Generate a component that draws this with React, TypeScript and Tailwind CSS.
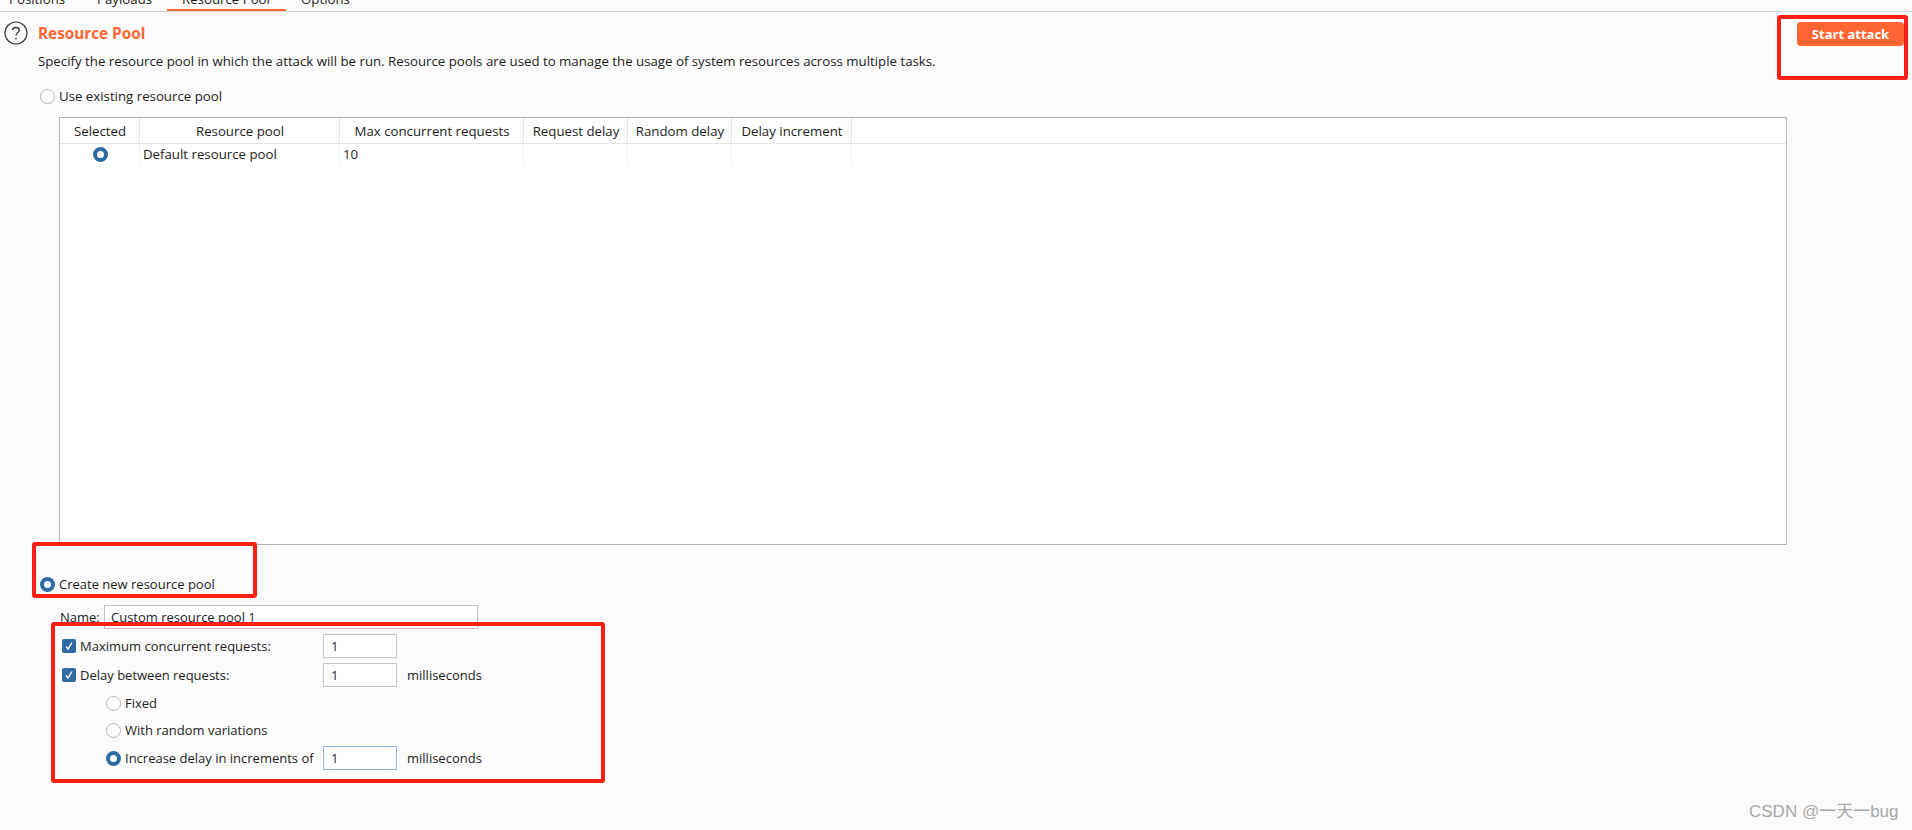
import React from 'react';

const FONT = 'font-["Open_Sans",sans-serif]';

const columns = [
  { label: 'Selected', width: 'w-[80px]' },
  { label: 'Resource pool', width: 'w-[200px]' },
  { label: 'Max concurrent requests', width: 'w-[184px]' },
  { label: 'Request delay', width: 'w-[104px]' },
  { label: 'Random delay', width: 'w-[104px]' },
  { label: 'Delay increment', width: 'w-[120px]' },
];

const Radio = ({ checked = false }: { checked?: boolean }) =>
  checked ? (
    <span className="box-border block w-[15px] h-[15px] shrink-0 rounded-full border-[4px] border-[#2f6aa3] bg-white" />
  ) : (
    <span className="box-border block w-[15px] h-[15px] shrink-0 rounded-full border border-[#b4b4b4] bg-white" />
  );

const Checkbox = () => (
  <span className="flex items-center justify-center w-[14px] h-[14px] shrink-0 rounded-[2px] bg-[#2f6aa3]">
    <svg width="10" height="10" viewBox="0 0 10 10" fill="none" stroke="#fff" strokeWidth="1.4">
      <path d="M2 5.5 L4 8 L8 1.5" />
    </svg>
  </span>
);

const NumberBox = ({ focused = false }: { focused?: boolean }) => (
  <div
    className={`box-border w-[74px] h-[24px] pl-[7px] flex items-center bg-white border ${
      focused ? 'border-[#8db4e2]' : 'border-[#c4c4c4]'
    }`}
  >
    1
  </div>
);

const HelpIcon = () => (
  <svg width="24" height="24" viewBox="0 0 24 24" fill="none" className="shrink-0">
    <circle cx="12" cy="12" r="11" stroke="#3c3c3c" strokeWidth="1.2" />
    <path d="M8.6 9.2 C8.8 5.6 15.2 5.6 15.3 9.2 C15.4 11.6 12 11.6 12 14.6" stroke="#3c3c3c" strokeWidth="1.3" />
    <circle cx="12" cy="17.6" r="0.9" fill="#3c3c3c" />
  </svg>
);

export default function App() {
  return (
    <div className={`${FONT} relative h-[830px] overflow-hidden bg-[#fbfbfb] text-[13.25px] leading-[18px] text-[#1c1c1c]`}>
      {/* tab strip, cropped by the top of the picture */}
      <div className="flex items-end h-[12px] pl-[9px] border-b border-[#d4d4d4] overflow-hidden">
        <div className="w-[88px] shrink-0 pb-[3px]">Positions</div>
        <div className="w-[70px] shrink-0 pb-[3px]">Payloads</div>
        <div className="w-[119px] shrink-0 pb-[1px] pl-[15px] border-b-2 border-[#ff6633]">Resource Pool</div>
        <div className="pl-[15px] pb-[3px]">Options</div>
      </div>

      <div className="flex justify-between pl-[4px] pr-[8px] pt-[9px]">
        <div className="flex items-center gap-[10px] h-[24px]">
          <HelpIcon />
          <h1 className="text-[15.3px] font-bold text-[#ff6633]">Resource Pool</h1>
        </div>
        <button className="mt-[1px] w-[107px] h-[24px] rounded-[4px] bg-[#ff6633] text-white text-[13px] font-bold">
          Start attack
        </button>
      </div>

      <div className="pl-[38px] mt-[6px]">Specify the resource pool in which the attack will be run. Resource pools are used to manage the usage of system resources across multiple tasks.</div>

      <div className="flex items-center gap-[4px] pl-[40px] mt-[17px]">
        <Radio />
        <span>Use existing resource pool</span>
      </div>

      <div className="ml-[59px] mt-[12px] w-[1728px] h-[428px] border border-[#b4b4b4] bg-white">
        <div className="flex h-[26px] border-b border-[#e6e6e6]">
          {columns.map((c) => (
            <div key={c.label} className={`${c.width} pl-[1px] flex items-center justify-center border-r border-[#e6e6e6]`}>
              {c.label}
            </div>
          ))}
        </div>
        <div className="flex h-[20px] items-center">
          <div className="w-[80px] pl-[2px] flex justify-center border-r border-[#f2f2f2] h-full items-center">
            <Radio checked />
          </div>
          <div className="w-[200px] pl-[3px] border-r border-[#f2f2f2] h-full flex items-center">Default resource pool</div>
          <div className="w-[184px] pl-[3px] border-r border-[#f2f2f2] h-full flex items-center">10</div>
          <div className="w-[104px] border-r border-[#f2f2f2] h-full" />
          <div className="w-[104px] border-r border-[#f2f2f2] h-full" />
          <div className="w-[120px] border-r border-[#f2f2f2] h-full" />
        </div>
      </div>

      <div className="text-[13px]">
        <div className="flex items-center gap-[4px] pl-[40px] mt-[30px]">
          <Radio checked />
          <span>Create new resource pool</span>
        </div>

        <div className="flex items-center pl-[60px] mt-[12px]">
          <span className="w-[44px]">Name:</span>
          <div className="box-border w-[374px] h-[24px] pl-[6px] flex items-center bg-white border border-[#c4c4c4]">
            Custom resource pool 1
          </div>
        </div>

        <div className="flex items-center pl-[62px] mt-[5px] h-[24px]">
          <div className="flex items-center gap-[4px] w-[261px]">
            <Checkbox />
            <span>Maximum concurrent requests:</span>
          </div>
          <NumberBox />
        </div>

        <div className="flex items-center pl-[62px] mt-[5px] h-[24px]">
          <div className="flex items-center gap-[4px] w-[261px]">
            <Checkbox />
            <span>Delay between requests:</span>
          </div>
          <NumberBox />
          <span className="ml-[10px]">milliseconds</span>
        </div>

        <div className="flex items-center gap-[4px] pl-[106px] mt-[4px] h-[24px]">
          <Radio />
          <span>Fixed</span>
        </div>

        <div className="flex items-center gap-[4px] pl-[106px] mt-[3px] h-[24px]">
          <Radio />
          <span>With random variations</span>
        </div>

        <div className="flex items-center pl-[106px] mt-[4px] h-[24px]">
          <div className="flex items-center gap-[4px] w-[217px]">
            <Radio checked />
            <span>Increase delay in increments of</span>
          </div>
          <NumberBox focused />
          <span className="ml-[10px]">milliseconds</span>
        </div>
      </div>

      {/* red annotation boxes drawn over the screenshot */}
      <div className="absolute left-[1777px] top-[15px] w-[131px] h-[65px] border-[4px] border-[#ff2015] rounded-[3px]" />
      <div className="absolute left-[32px] top-[542px] w-[225px] h-[56px] border-[4px] border-[#ff2015] rounded-[3px]" />
      <div className="absolute left-[51px] top-[622px] w-[554px] h-[161px] border-[4px] border-[#ff2015] rounded-[3px]" />

      <div className='absolute left-[1749px] top-[801px] text-[17px] leading-[22px] text-[#a8a8a8] font-["Liberation_Sans","Noto_Sans_CJK_SC",sans-serif]'>
        CSDN @一天一bug
      </div>
    </div>
  );
}
